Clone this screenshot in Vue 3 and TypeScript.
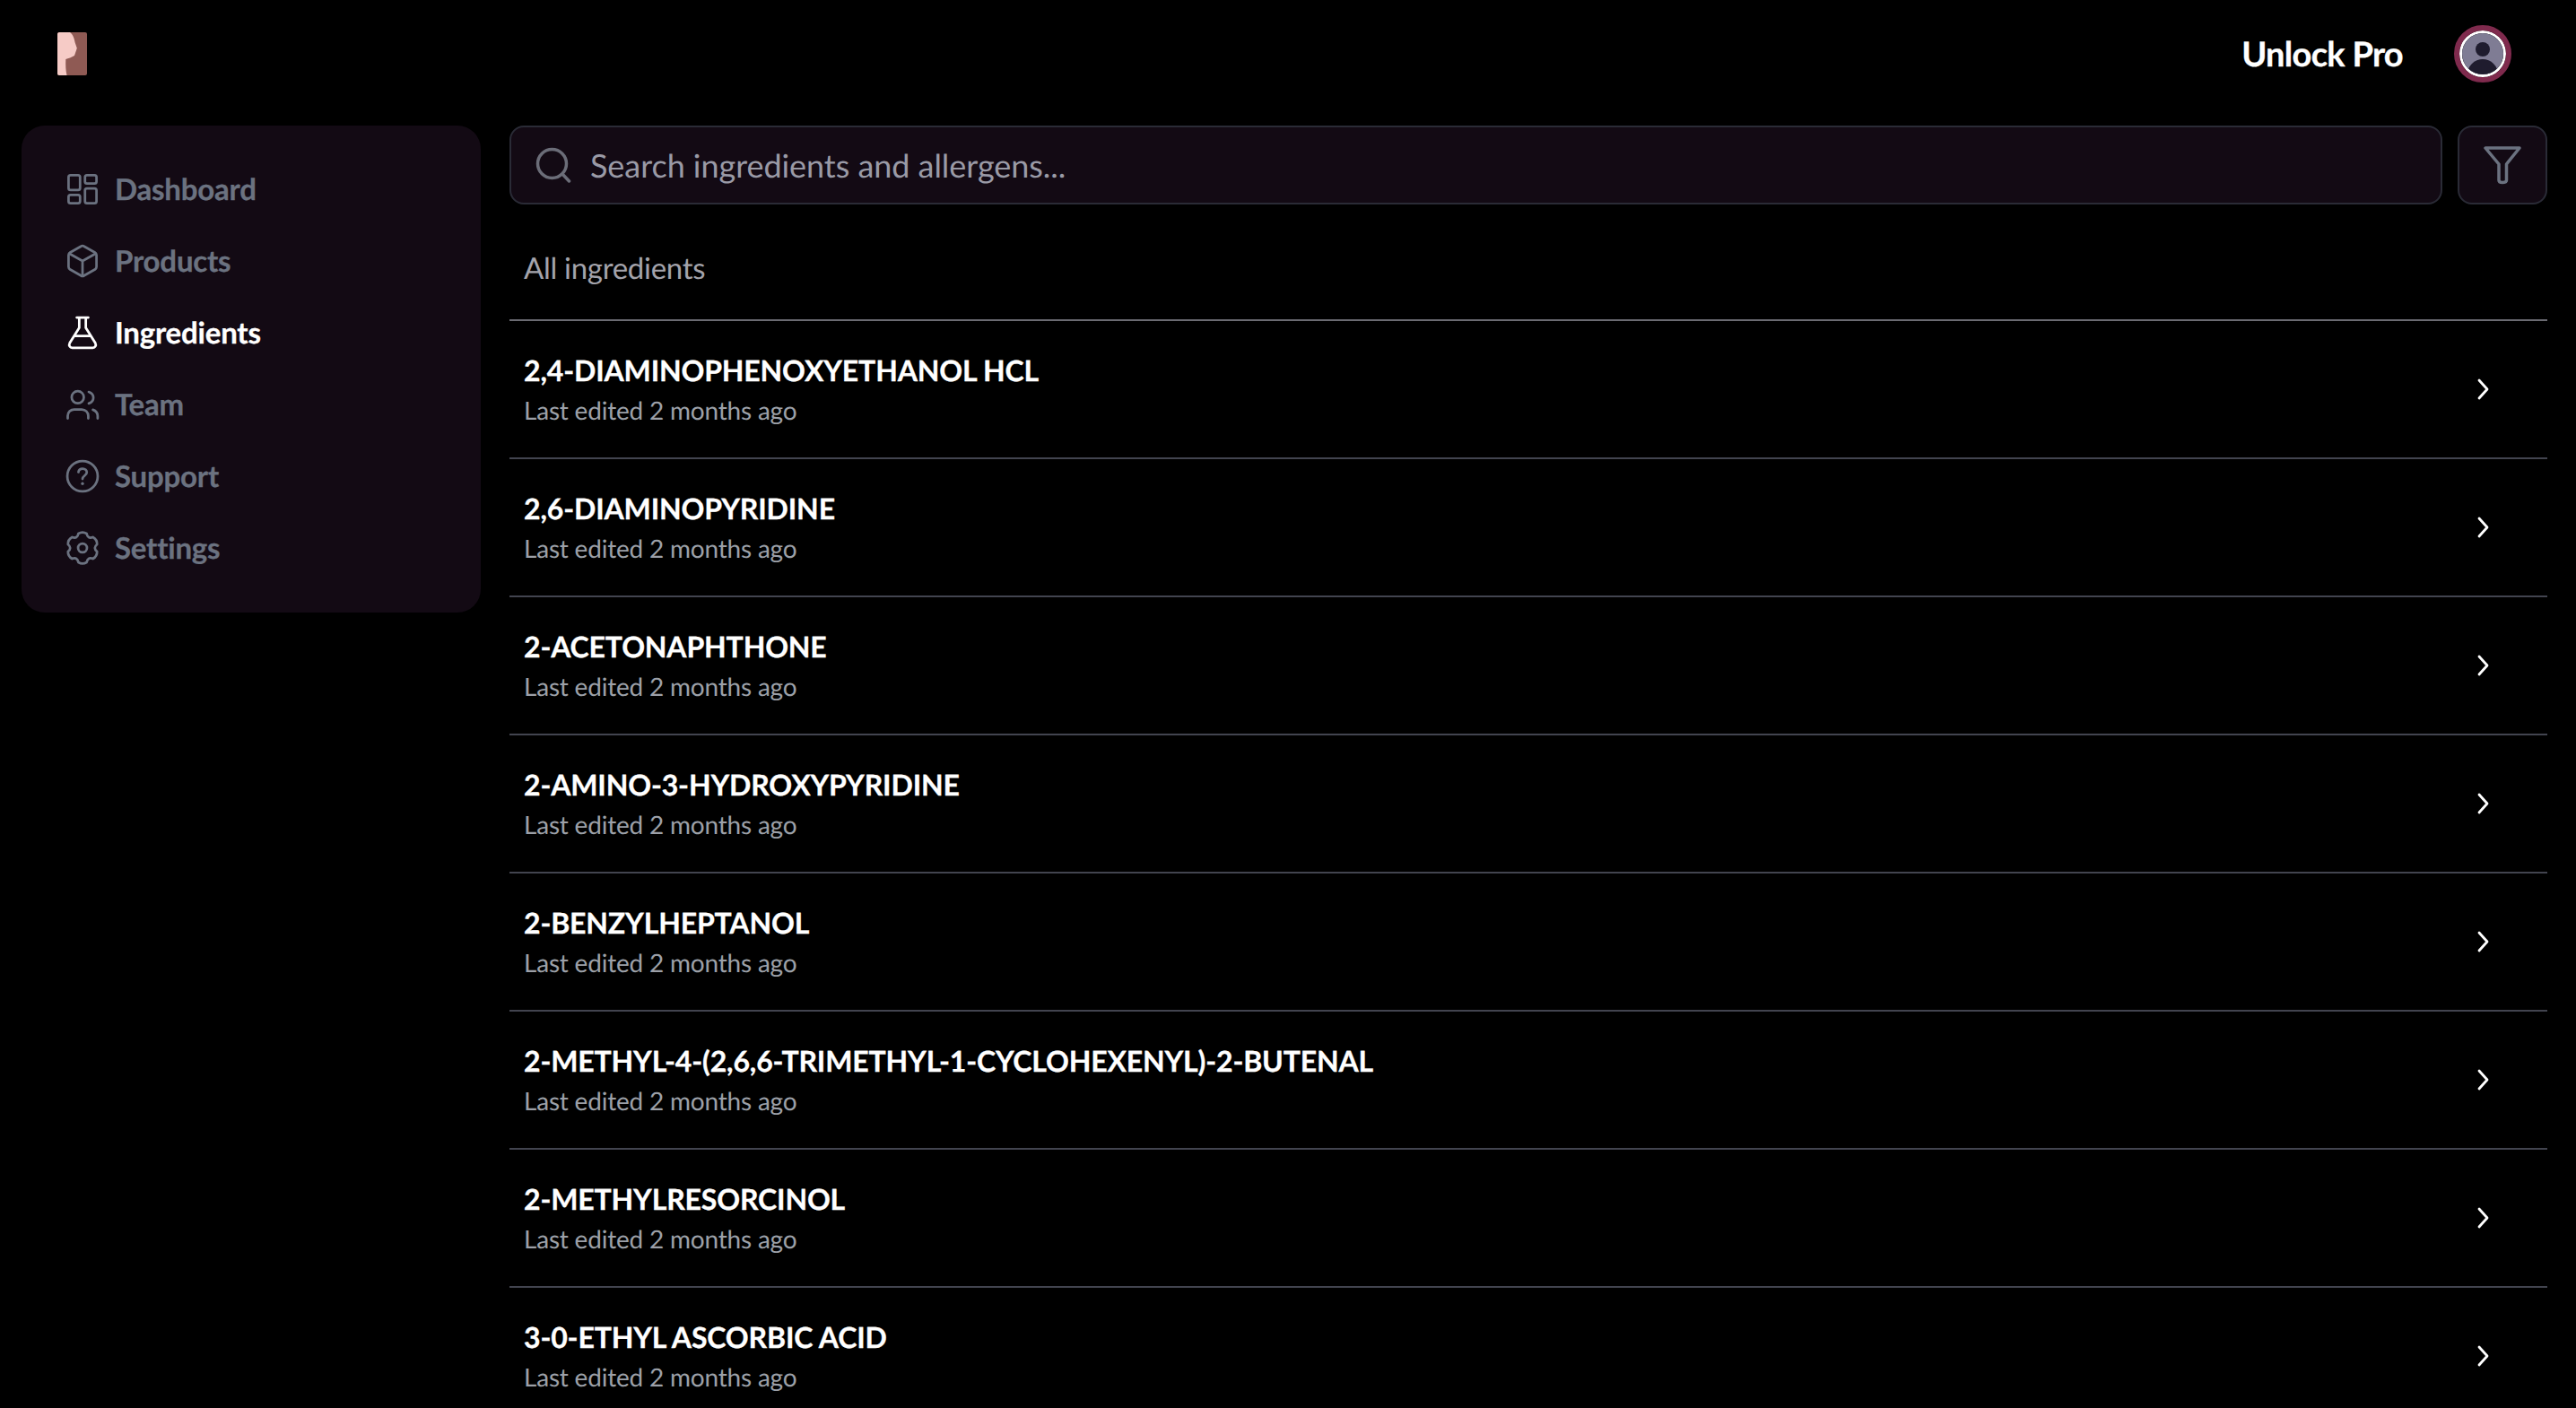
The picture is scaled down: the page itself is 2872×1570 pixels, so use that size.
<script setup lang="ts">
const items: string[] = [
  '2,4-DIAMINOPHENOXYETHANOL HCL',
  '2,6-DIAMINOPYRIDINE',
  '2-ACETONAPHTHONE',
  '2-AMINO-3-HYDROXYPYRIDINE',
  '2-BENZYLHEPTANOL',
  '2-METHYL-4-(2,6,6-TRIMETHYL-1-CYCLOHEXENYL)-2-BUTENAL',
  '2-METHYLRESORCINOL',
  '3-0-ETHYL ASCORBIC ACID',
]

function polar(r: number, deg: number): string {
  const a = (deg * Math.PI) / 180
  return `${(12 + r * Math.cos(a)).toFixed(2)} ${(12 + r * Math.sin(a)).toFixed(2)}`
}

function gearPath(): string {
  let d = `M${polar(9.1, -106)}`
  for (let k = 0; k < 6; k++) {
    const a = -90 + 60 * k
    d += `Q${polar(10.3, a)} ${polar(9.1, a + 16)}`
    d += `Q${polar(6.2, a + 30)} ${polar(9.1, a + 44)}`
  }
  return d + 'Z'
}
const gear = gearPath()
</script>

<template>
  <div class="page">
    <header class="top">
      <svg class="logo" viewBox="0 0 33 48" aria-hidden="true">
        <rect width="33" height="48" rx="2" fill="#8f5a54" />
        <path d="M2 0H14C17 2 19 7 19.500 11L21.800 17.700L19 26C16 28 12 29 9.300 30C9 37 9.300 43 10.500 48H2C1 48 0 47 0 46V2C0 1 1 0 2 0Z" fill="#f6cbc6" />
      </svg>
      <div class="top-right">
        <span class="pro">Unlock Pro</span>
        <span class="avatar">
          <svg viewBox="0 0 46 46" aria-hidden="true">
            <rect width="46" height="46" fill="#7f7c94" />
            <circle cx="23" cy="18" r="8" fill="#1f1c2e" />
            <ellipse cx="23" cy="46" rx="17" ry="17" fill="#1f1c2e" />
          </svg>
        </span>
      </div>
    </header>
    <div class="body">
      <aside class="side">
        <nav class="nav">
          <a class="nav-item">
            <svg class="nav-icon" viewBox="0 0 24 24"><rect x="3.500" y="3.500" width="7" height="9" rx="1.200" /><rect x="13.500" y="3.500" width="7" height="5" rx="1.200" /><rect x="13.500" y="11.500" width="7" height="9" rx="1.200" /><rect x="3.500" y="15.500" width="7" height="5" rx="1.200" /></svg>
            <span>Dashboard</span>
          </a>
          <a class="nav-item">
            <svg class="nav-icon" viewBox="0 0 24 24"><path d="M11 3.100C11.600 2.700 12.400 2.700 13 3.100L19.500 6.800C20.100 7.200 20.500 7.800 20.500 8.500V15.500C20.500 16.200 20.100 16.800 19.500 17.200L13 20.900C12.400 21.300 11.600 21.300 11 20.900L4.500 17.200C3.900 16.800 3.500 16.200 3.500 15.500V8.500C3.500 7.800 3.900 7.200 4.500 6.800Z" /><path d="M4 7.500 12 12 20 7.500M12 12V21" /></svg>
            <span>Products</span>
          </a>
          <a class="nav-item active">
            <svg class="nav-icon" viewBox="0 0 24 24"><path d="M8.500 2.750H15.500M10 2.750V9L4.200 18.300C3.500 19.700 4.300 21.250 5.800 21.250H18.200C19.700 21.250 20.500 19.700 19.800 18.300L14 9V2.750M7 14H17" /></svg>
            <span>Ingredients</span>
          </a>
          <a class="nav-item">
            <svg class="nav-icon" viewBox="0 0 24 24"><circle cx="9.100" cy="7.600" r="3.700" /><path d="M3 20.500V19C3 16.600 4.800 15 7 15H11.500C13.800 15 15.500 16.800 15.500 19V20.500M15.800 4.400C17.500 5 18.600 6.200 18.600 7.900S17.500 10.800 15.800 11.400M18.300 15.200C20 15.800 21.200 17.200 21.200 19V20.500" /></svg>
            <span>Team</span>
          </a>
          <a class="nav-item">
            <svg class="nav-icon" viewBox="0 0 24 24"><circle cx="12" cy="12" r="9.250" /><path d="M9.500 9.500C9.700 8.200 10.700 7.400 12.100 7.400 13.600 7.400 14.600 8.400 14.600 9.700 14.600 11.600 12 11.600 12 13.700" /><circle class="dot" cx="12" cy="16.500" r="0.900" /></svg>
            <span>Support</span>
          </a>
          <a class="nav-item">
            <svg class="nav-icon" viewBox="0 0 24 24"><path :d="gear" /><circle cx="12" cy="12" r="2.700" /></svg>
            <span>Settings</span>
          </a>
        </nav>
      </aside>
      <main class="main">
        <div class="tools">
          <div class="search">
            <svg class="search-icon" viewBox="0 0 40 40"><circle cx="18.500" cy="18.500" r="16" /><path d="M30 30 37.500 38" /></svg>
            <span class="placeholder">Search ingredients and allergens...</span>
          </div>
          <button class="filter" type="button" aria-label="Filter">
            <svg viewBox="0 0 44 44"><path d="M3 3H41L26.500 21V39C26.500 41 24 41.500 22 41.500 20 41.500 18 41 18 39V21Z" /></svg>
          </button>
        </div>
        <h2 class="heading">All ingredients</h2>
        <ul class="list">
          <li v-for="item in items" :key="item" class="row">
            <div class="row-text">
              <div class="name">{{ item }}</div>
              <div class="meta">Last edited 2 months ago</div>
            </div>
            <svg class="chev" viewBox="0 0 16 24"><path d="M3 2 12 12 3 22" /></svg>
          </li>
        </ul>
      </main>
    </div>
  </div>
</template>

<style>
html, body { margin: 0; background: #000; }
</style>

<style scoped>
.page {
  height: 100vh;
  overflow: hidden;
  background: #000;
  color: #fff;
  font-family: Lato, "Liberation Sans", sans-serif;
  text-rendering: geometricPrecision;
}
.top {
  height: 140px;
  display: flex;
  align-items: center;
  justify-content: space-between;
  padding: 0 78px 20px 64px;
  box-sizing: border-box;
}
.logo { width: 33px; height: 48px; display: block; }
.top-right { display: flex; align-items: center; gap: 63px; }
.pro { font-size: 38px; font-weight: 700; letter-spacing: -0.7px; -webkit-text-stroke: 0.3px #fff; }
.avatar {
  display: block;
  box-sizing: content-box;
  width: 46px;
  height: 46px;
  border-radius: 50%;
  border: 3px solid #fff;
  outline: 6px solid #7f2a4d;
  overflow: hidden;
}
.avatar svg { display: block; width: 100%; height: 100%; }
.body { display: flex; gap: 32px; padding: 0 32px 0 24px; }
.side { width: 512px; flex: none; }
.nav {
  background: #130a14;
  border-radius: 26px;
  padding: 31px 0 32px;
}
.nav-item {
  height: 80px;
  display: flex;
  align-items: center;
  gap: 14px;
  padding-left: 46px;
  font-size: 33px;
  font-weight: 700;
  letter-spacing: -0.2px;
  color: #6b7280;
  -webkit-text-stroke: 0.3px currentColor;
}
.nav-item.active { color: #fff; }
.nav-icon {
  width: 44px;
  height: 44px;
  fill: none;
  stroke: currentColor;
  stroke-width: 1.500;
  stroke-linecap: round;
  stroke-linejoin: round;
  flex: none;
}
.nav-icon .dot { fill: currentColor; stroke: none; }
.main { flex: 1; min-width: 0; }
.tools { display: flex; gap: 17px; height: 88px; }
.search, .filter {
  background: #130a14;
  border: 2px solid #2a2b36;
  border-radius: 16px;
  box-sizing: border-box;
}
.search {
  flex: 1;
  display: flex;
  align-items: center;
  gap: 21px;
  padding-left: 27px;
}
.search-icon {
  width: 40px;
  height: 40px;
  fill: none;
  stroke: #6b6d78;
  stroke-width: 3.500;
  stroke-linecap: round;
  flex: none;
}
.placeholder { font-size: 36px; color: #9a9aa6; letter-spacing: -0.05px; }
.filter {
  width: 100px;
  flex: none;
  padding: 0;
  display: flex;
  align-items: center;
  justify-content: center;
}
.filter svg {
  width: 44px;
  height: 44px;
  fill: none;
  stroke: #6b7280;
  stroke-width: 3.500;
  stroke-linejoin: round;
}
.heading {
  margin: 0;
  height: 130px;
  display: flex;
  align-items: center;
  padding-left: 16px;
  padding-top: 14px;
  box-sizing: border-box;
  font-size: 33px;
  font-weight: 400;
  color: #a3a3ab;
  letter-spacing: -0.3px;
  border-bottom: 2px solid #6b6b72;
}
.list { list-style: none; margin: 0; padding: 0; }
.row {
  height: 154px;
  box-sizing: border-box;
  display: flex;
  align-items: center;
  justify-content: space-between;
  padding: 0 63px 0 16px;
  border-bottom: 2px solid #42444f;
}
.name { font-size: 32px; font-weight: 700; letter-spacing: -0.15px; line-height: 42px; -webkit-text-stroke: 0.3px #fff; }
.meta { font-size: 28px; color: #9ca0a8; line-height: 40px; letter-spacing: -0.2px; margin-top: 3px; }
.chev {
  width: 16px;
  height: 24px;
  fill: none;
  stroke: #fff;
  stroke-width: 2.800;
  stroke-linecap: round;
  stroke-linejoin: round;
}
</style>
